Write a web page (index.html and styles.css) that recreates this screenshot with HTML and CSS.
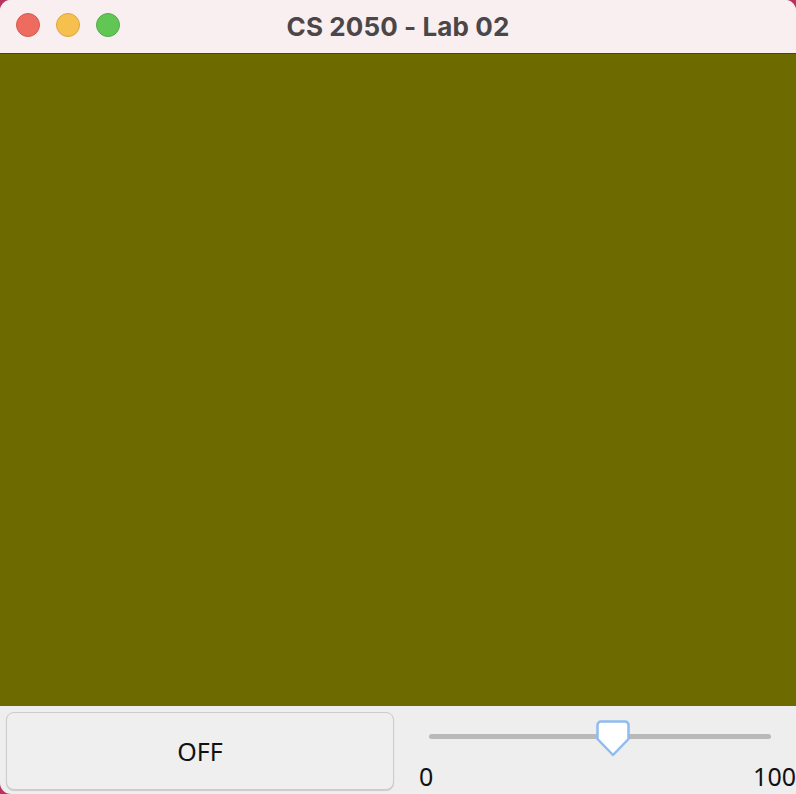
FILE: index.html
```html
<!DOCTYPE html>
<html>
<head>
<meta charset="utf-8">
<link rel="stylesheet" href="styles.css">
</head>
<body>
<div class="window">
  <div class="titlebar">
    <div class="lights">
      <span class="light red"></span>
      <span class="light yellow"></span>
      <span class="light green"></span>
    </div>
    <div class="title">CS 2050 - Lab 02</div>
  </div>
  <div class="canvas"></div>
  <div class="controls">
    <button class="toggle">OFF</button>
    <div class="slider">
      <div class="track">
        <svg class="thumb" width="34" height="37" viewBox="0 0 34 37">
          <path d="M5 1.5 H29 A3.5 3.5 0 0 1 32.5 5 V19 L17 35 L1.5 19 V5 A3.5 3.5 0 0 1 5 1.5 Z" fill="#ffffff" stroke="#8dbcf2" stroke-width="2.5" stroke-linejoin="round"/>
        </svg>
      </div>
      <div class="labels"><span>0</span><span>100</span></div>
    </div>
  </div>
</div>
</body>
</html>
```
FILE: styles.css
```css
html, body {
  margin: 0;
  padding: 0;
  background: #b8345f;
  width: 796px;
  height: 794px;
  overflow: hidden;
}
.window {
  width: 796px;
  height: 794px;
  border-radius: 11px 11px 0 11px;
  overflow: hidden;
  display: flex;
  flex-direction: column;
  background: #eeeeee;
  position: relative;
}
.titlebar {
  height: 53px;
  background: #f9eff1;
  border-bottom: 1px solid #4b4900;
  position: relative;
  display: flex;
  align-items: center;
  justify-content: center;
  flex: none;
}
.lights {
  position: absolute;
  left: 16px;
  top: 13px;
  display: flex;
  gap: 16px;
}
.light {
  width: 24px;
  height: 24px;
  border-radius: 50%;
  box-sizing: border-box;
}
.red { background: #ee6b60; border: 1px solid #d55a50; }
.yellow { background: #f6c04f; border: 1px solid #dfa53c; }
.green { background: #62c655; border: 1px solid #52ad45; }
.title {
  font-family: Inter, "Noto Sans", sans-serif;
  font-weight: 700;
  font-size: 26px;
  color: #4b4647;
  letter-spacing: 0.1px;
}
.canvas {
  height: 652px;
  background: #6d6a00;
  flex: none;
}
.controls {
  flex: 1;
  display: flex;
  padding: 6px 0 0 6px;
}
.toggle {
  width: 388px;
  height: 78px;
  box-sizing: border-box;
  border: 1px solid #cbcbcb;
  border-radius: 8px;
  background: #efefef;
  box-shadow: 0 1px 1px rgba(0,0,0,0.15);
  font-family: "Noto Sans", "Open Sans", sans-serif;
  font-size: 25px;
  color: #111;
  padding: 0;
  flex: none;
}
.slider {
  flex: 1;
  display: flex;
  flex-direction: column;
}
.track {
  position: relative;
  margin: 22px 25px 0 35px;
  height: 5px;
  background: #b9b9b9;
  border-radius: 3px;
}
.thumb {
  position: absolute;
  left: 167px;
  top: -14px;
}
.labels {
  display: flex;
  justify-content: space-between;
  margin: 23px 0 0 25px;
  font-family: "Noto Sans", "Open Sans", sans-serif;
  font-size: 25px;
  line-height: 28px;
  color: #111;
}
```
